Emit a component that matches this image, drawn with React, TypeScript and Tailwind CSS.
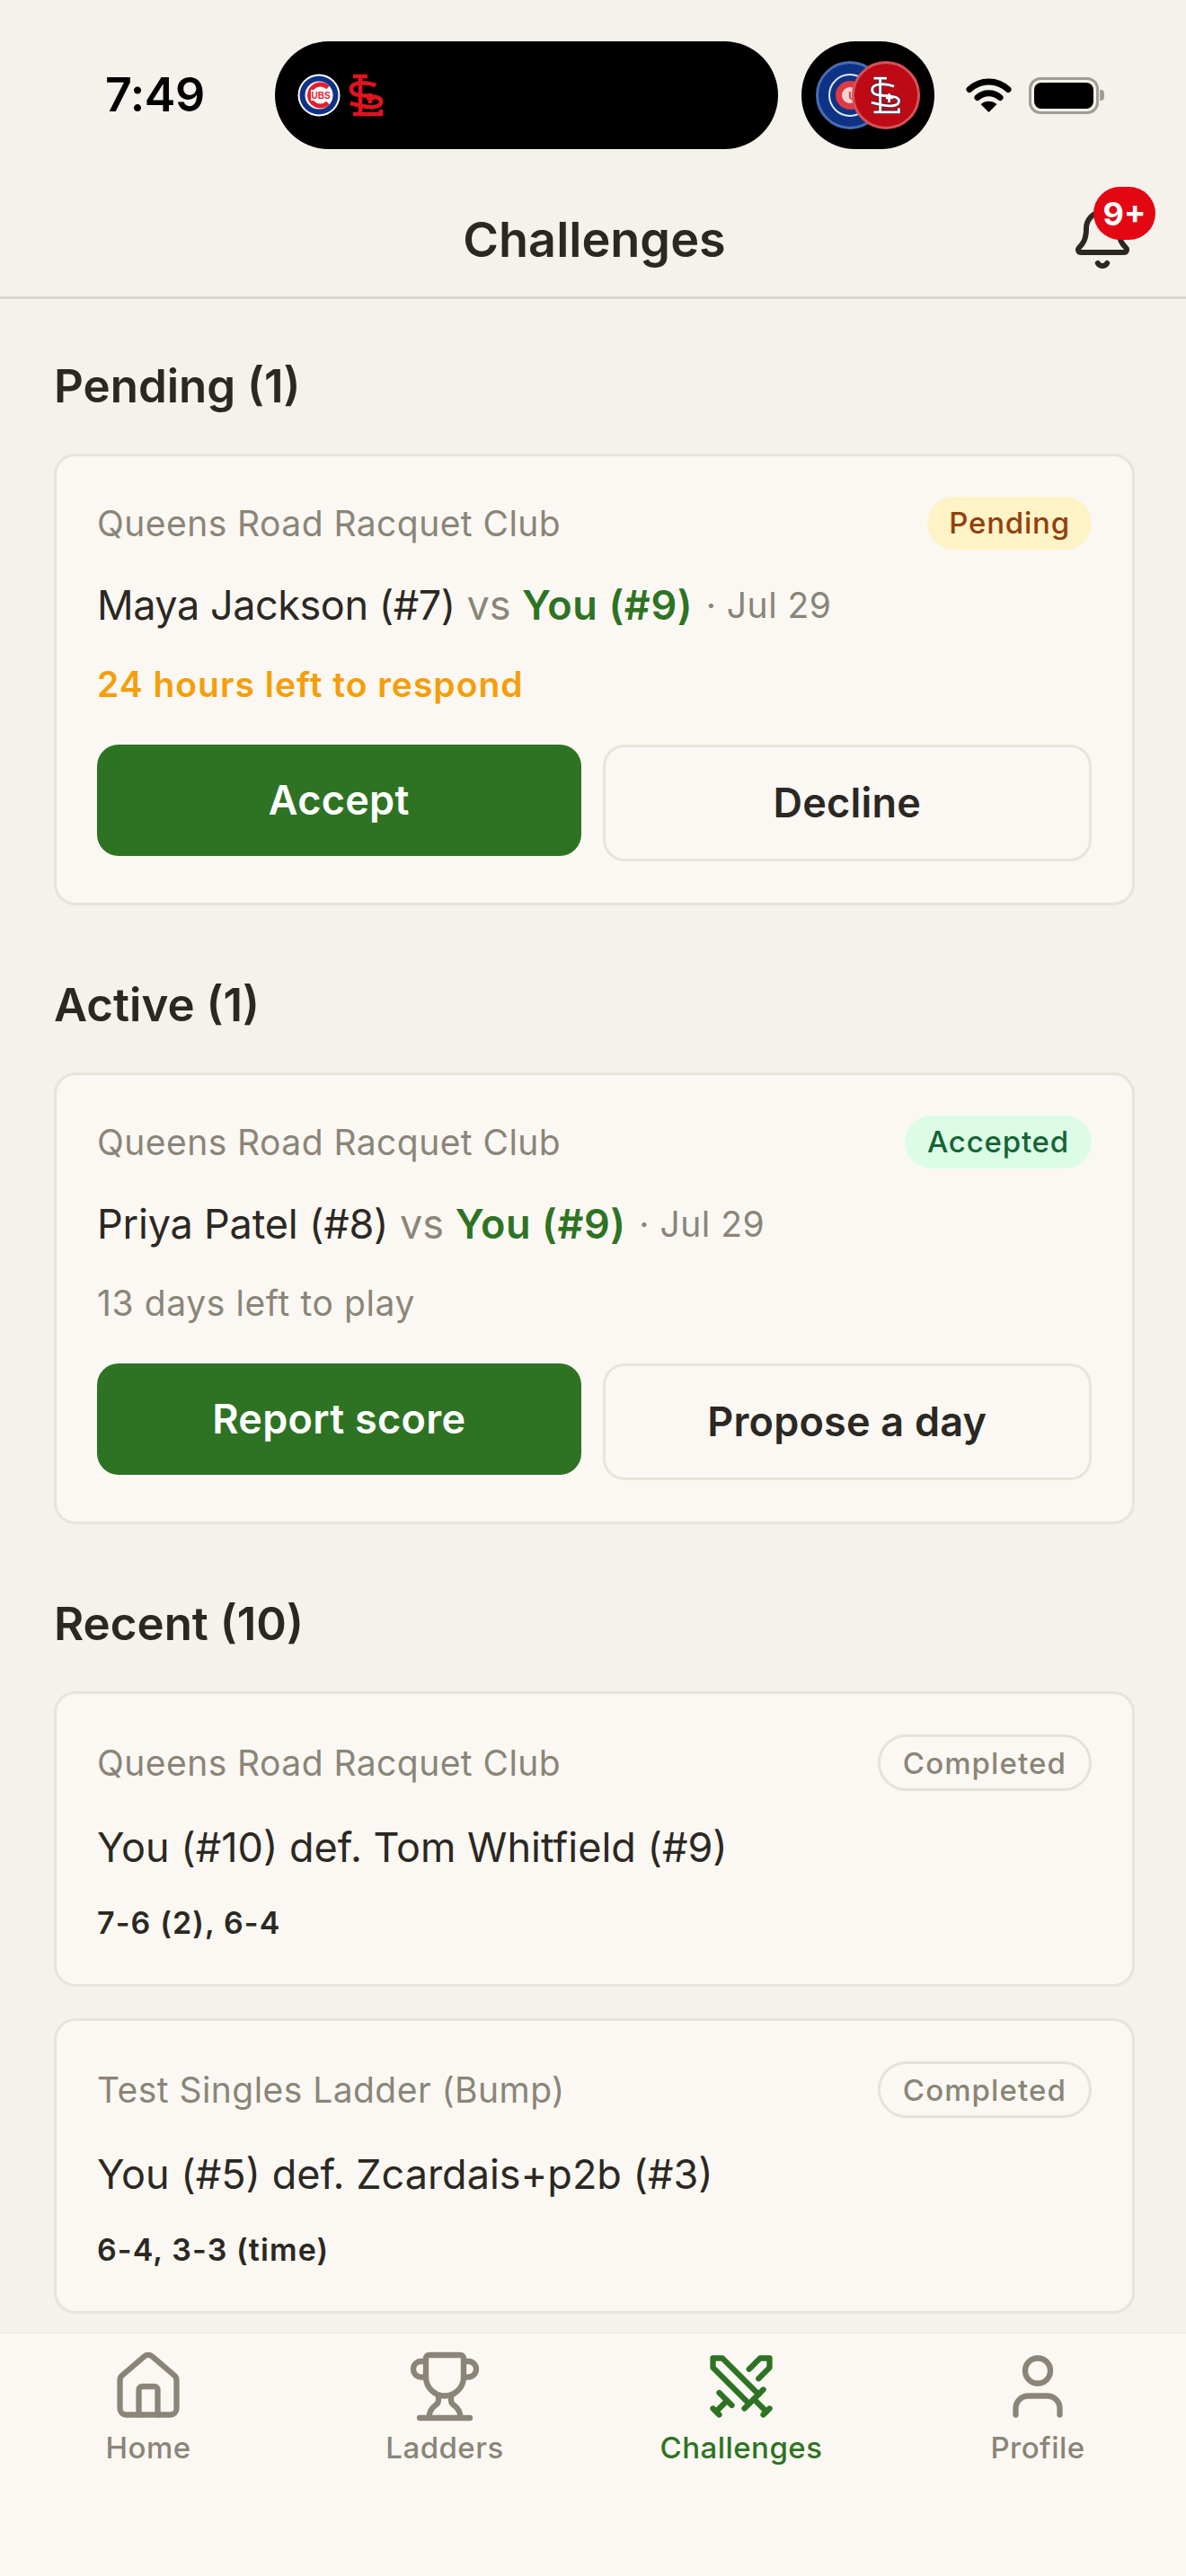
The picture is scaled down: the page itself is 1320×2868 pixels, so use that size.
import { Bell, House, Swords, Trophy, User } from 'lucide-react'

function StlMark({ color, outline }: { color: string; outline: string }) {
  return (
    <g fill="none">
      {[outline, color].map((c, i) => (
        <g key={i} stroke={c} strokeWidth={i === 0 ? 4.6 : 3.2}>
          <path d="M5 3h16M13 3v42M5 45h31v-5" />
          <path d="M30 13C20 9 3 9 3 17c0 8 11 7 21 8c9 1 13 3 12 7c-1 6-12 6-21 4L2 33" />
          <path d="M20 27h9M24 22v11" />
        </g>
      ))}
    </g>
  )
}

function DualLogos() {
  return (
    <div className="ml-[25px] flex items-center gap-[9px]">
      <svg width="48" height="48" viewBox="0 0 48 48" className="shrink-0">
        <circle cx="24" cy="24" r="23.500" fill="#ffffff" />
        <circle cx="24" cy="24" r="21.500" fill="#0e3386" />
        <circle cx="24" cy="24" r="15.500" fill="#ffffff" />
        <path d="M34 15.500a12 12 0 1 0 0 17" fill="none" stroke="#e4202c" strokeWidth="5" />
        <rect x="15" y="18" width="21" height="12" fill="#ffffff" />
        <text x="26" y="28" textAnchor="middle" fontFamily="Liberation Sans, sans-serif" fontWeight="700" fontSize="10" fill="#e4202c">UBS</text>
      </svg>
      <svg width="40" height="48" viewBox="0 0 40 48" className="shrink-0">
        <StlMark color="#e2141e" outline="#e2141e" />
      </svg>
    </div>
  )
}

function OverlapLogos() {
  return (
    <div className="flex items-center">
      <svg width="76" height="76" viewBox="0 0 76 76" className="shrink-0">
        <circle cx="38" cy="38" r="36.500" fill="#0e3386" stroke="#4a6db0" strokeWidth="3" />
        <circle cx="38" cy="38" r="23" fill="none" stroke="#dfe6f2" strokeWidth="2" />
        <circle cx="38" cy="38" r="16" fill="#dd3b44" />
        <circle cx="38" cy="38" r="9" fill="#f3d4d2" />
        <text x="41" y="43" textAnchor="middle" fontFamily="Liberation Sans, sans-serif" fontWeight="700" fontSize="13" fill="#dd3b44">U</text>
      </svg>
      <svg width="76" height="76" viewBox="0 0 76 76" className="-ml-[36px] shrink-0">
        <circle cx="38" cy="38" r="36.500" fill="#bd0a14" stroke="#d6525a" strokeWidth="3" />
        <svg x="20" y="16" width="36" height="44" viewBox="0 0 40 48">
          <StlMark color="#ffffff" outline="#1f2a55" />
        </svg>
      </svg>
    </div>
  )
}

function StatusBar() {
  return (
    <div className="flex h-[166px] items-start pt-[46px] pl-[117px]">
      <div className="w-[189px] pt-[29px] font-semibold text-[52px] leading-[62px] tracking-[-0.5px] text-black">7:49</div>
      <div className="flex h-[120px] w-[560px] items-center rounded-[60px] bg-black">
        <DualLogos />
      </div>
      <div className="ml-[26px] flex h-[120px] w-[148px] items-center justify-center rounded-[60px] bg-black">
        <OverlapLogos />
      </div>
      <div className="ml-[35px] flex h-[120px] items-center gap-[19px]">
        <svg width="51" height="39" viewBox="0 0 51 39" className="-mt-[1px]">
          <path d="M4 13.500C16 2 35 2 47 13.500" fill="none" stroke="#000" strokeWidth="7" strokeLinecap="round" />
          <path d="M13 22.500C20 16 31 16 38 22.500" fill="none" stroke="#000" strokeWidth="7" strokeLinecap="round" />
          <path d="M16.500 30c5-4.500 13-4.500 18 0L25.500 39z" fill="#000" />
        </svg>
        <div className="flex items-center gap-[1px]">
          <div className="flex h-[41px] w-[78px] items-center justify-center rounded-[13px] border-[3px] border-[#a09d97]">
            <div className="h-[29px] w-[66px] rounded-[8px] bg-black" />
          </div>
          <div className="h-[12px] w-[5px] rounded-r-[4px] bg-[#a09d97]" />
        </div>
      </div>
    </div>
  )
}

function Header() {
  return (
    <header className="grid h-[167px] grid-cols-[1fr_auto_1fr] border-b-[3px] border-[#d9d6cf] pl-[60px] pr-[57px]">
      <div />
      <h1 className="pt-[67px] text-[54px] leading-[68px] font-semibold text-[#2b2823]">Challenges</h1>
      <div className="relative justify-self-end pt-[64px]">
        <Bell size={72} strokeWidth={2} className="text-[#2b2823]" />
        <span className="absolute top-[42px] -right-[23px] flex h-[59px] w-[69px] items-center justify-center rounded-full bg-[#e30613] text-[36px] leading-none font-bold text-white">9+</span>
      </div>
    </header>
  )
}

function SectionTitle({ children }: { children: string }) {
  return <h2 className="mb-[45px] text-[51px] leading-[60px] font-semibold text-[#2b2823]">{children}</h2>
}

type BadgeKind = 'pending' | 'accepted' | 'completed'

const badgeStyles: Record<BadgeKind, string> = {
  pending: 'bg-[#fef3c7] text-[#92400e] h-[59px] px-[24px] tracking-[0.8px]',
  accepted: 'bg-[#dcfce7] text-[#166534] h-[59px] px-[25px] tracking-[0.8px]',
  completed: 'border-[3px] border-[#e6e2d9] text-[#8a8578] h-[63px] px-[25px] pt-[2px] tracking-[1.1px]',
}

function Badge({ kind, children }: { kind: BadgeKind; children: string }) {
  return (
    <span className={`flex items-center rounded-full text-[33px] leading-none font-medium ${badgeStyles[kind]}`}>
      {children}
    </span>
  )
}

function CardTop({ club, kind, label }: { club: string; kind: BadgeKind; label: string }) {
  return (
    <div className="flex items-start justify-between">
      <span className={`text-[39px] leading-[46px] tracking-[0.45px] text-[#8a8578] ${kind === 'completed' ? 'mt-[9px]' : 'mt-[7px]'}`}>{club}</span>
      <Badge kind={kind}>{label}</Badge>
    </div>
  )
}

type ActionCardProps = {
  opponent: string
  opponentClass: string
  kind: BadgeKind
  label: string
  note: string
  noteClass: string
  primary: string
  secondary: string
}

function ActionCard({ opponent, opponentClass, kind, label, note, noteClass, primary, secondary }: ActionCardProps) {
  return (
    <div className="h-[503px] rounded-[24px] border-[3px] border-[#e8e4da] bg-[#fbf8f3] px-[45px] pt-[45px]">
      <CardTop club="Queens Road Racquet Club" kind={kind} label={label} />
      <div className="mt-[32px] flex h-[60px] items-center whitespace-pre text-[45px] text-[#2b2823]">
        <span className={opponentClass}>{opponent}</span>
        <span className="text-[#8a8578]"> vs </span>
        <span className="font-semibold tracking-[0.6px] text-[#2e7323]">You (#9)</span>
        <span className="ml-[3px] text-[39px] tracking-[0.5px] text-[#8a8578]"> · Jul 29</span>
      </div>
      <div className={`mt-[28px] h-[60px] text-[39px] leading-[60px] ${noteClass}`}>{note}</div>
      <div className="mt-[37px] flex items-start gap-[24px]">
        <button className="h-[124px] flex-1 rounded-[24px] bg-[#2e7323] text-[45px] font-semibold tracking-[0.3px] text-white">{primary}</button>
        <button className="h-[130px] flex-1 rounded-[24px] border-[3px] border-[#e8e4da] text-[45px] font-semibold tracking-[0.2px] text-[#2b2823]">{secondary}</button>
      </div>
    </div>
  )
}

function ResultCard({ club, result, score }: { club: string; result: string; score: string }) {
  return (
    <div className="h-[329px] rounded-[24px] border-[3px] border-[#e8e4da] bg-[#fbf8f3] px-[45px] pt-[45px]">
      <CardTop club={club} kind="completed" label="Completed" />
      <div className="mt-[33px] h-[60px] text-[45px] leading-[60px] text-[#2b2823]">{result}</div>
      <div className="mt-[32px] text-[34px] leading-[44px] font-semibold tracking-[1.1px] text-[#2b2823]">{score}</div>
    </div>
  )
}

const tabs = [
  { label: 'Home', icon: House, active: false },
  { label: 'Ladders', icon: Trophy, active: false },
  { label: 'Challenges', icon: Swords, active: true },
  { label: 'Profile', icon: User, active: false },
]

function TabBar() {
  return (
    <nav className="grid h-[271px] shrink-0 grid-cols-4 border-t-[1px] border-[#ebe7dd] bg-[#fbf8f3] pt-[17px]">
      {tabs.map(({ label, icon: Icon, active }) => (
        <div key={label} className={`flex flex-col items-center ${active ? 'text-[#2e7323]' : 'text-[#8a8578]'}`}>
          <Icon size={84} strokeWidth={1.8} />
          <span className="mt-[4px] text-[33px] leading-[44px] font-medium tracking-[0.45px]">{label}</span>
        </div>
      ))}
    </nav>
  )
}

export default function App() {
  return (
    <div className="flex h-[2868px] w-[1320px] flex-col overflow-hidden bg-[#f5f1eb] font-['Inter',sans-serif]">
      <StatusBar />
      <Header />
      <main className="flex-1 overflow-hidden pt-[67px] pr-[57px] pl-[60px]">
        <section>
          <SectionTitle>Pending (1)</SectionTitle>
          <ActionCard
            opponent="Maya Jackson (#7)"
            opponentClass="tracking-[-0.45px]"
            kind="pending"
            label="Pending"
            note="24 hours left to respond"
            noteClass="font-semibold tracking-[1px] text-[#f59e0b]"
            primary="Accept"
            secondary="Decline"
          />
        </section>
        <section className="mt-[81px]">
          <SectionTitle>Active (1)</SectionTitle>
          <ActionCard
            opponent="Priya Patel (#8)"
            opponentClass="tracking-[-0.2px]"
            kind="accepted"
            label="Accepted"
            note="13 days left to play"
            noteClass="tracking-[0.6px] text-[#8a8578]"
            primary="Report score"
            secondary="Propose a day"
          />
        </section>
        <section className="mt-[81px]">
          <SectionTitle>Recent (10)</SectionTitle>
          <div className="flex flex-col gap-[35px]">
            <ResultCard club="Queens Road Racquet Club" result="You (#10) def. Tom Whitfield (#9)" score="7-6 (2), 6-4" />
            <ResultCard club="Test Singles Ladder (Bump)" result="You (#5) def. Zcardais+p2b (#3)" score="6-4, 3-3 (time)" />
          </div>
        </section>
      </main>
      <TabBar />
    </div>
  )
}
